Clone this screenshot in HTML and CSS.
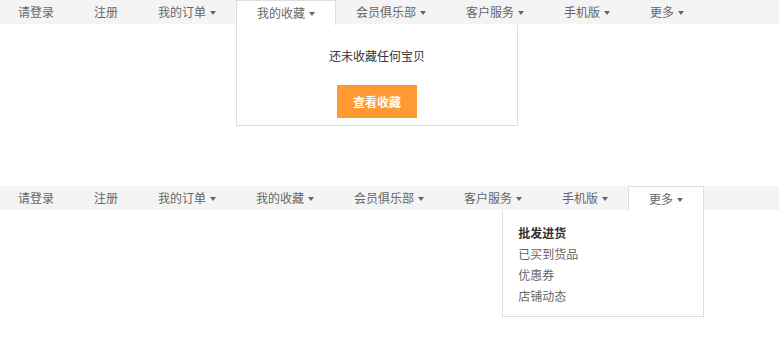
FILE: index.html
```html
<!DOCTYPE html>
<html lang="zh-CN">
<head>
<meta charset="utf-8">
<title>Site nav</title>
<link rel="stylesheet" href="styles.css">
</head>
<body>
<section class="demo">
  <ul class="bar">
    <li class="item first">请登录</li>
    <li class="item">注册</li>
    <li class="item">我的订单<i class="caret"></i></li>
    <li class="item active">我的收藏<i class="caret"></i>
      <div class="drop drop-fav">
        <p class="empty">还未收藏任何宝贝</p>
        <a class="btn">查看收藏</a>
      </div>
    </li>
    <li class="item">会员俱乐部<i class="caret"></i></li>
    <li class="item">客户服务<i class="caret"></i></li>
    <li class="item">手机版<i class="caret"></i></li>
    <li class="item">更多<i class="caret"></i></li>
  </ul>
</section>
<section class="demo">
  <ul class="bar">
    <li class="item first">请登录</li>
    <li class="item">注册</li>
    <li class="item">我的订单<i class="caret"></i></li>
    <li class="item">我的收藏<i class="caret"></i></li>
    <li class="item">会员俱乐部<i class="caret"></i></li>
    <li class="item">客户服务<i class="caret"></i></li>
    <li class="item">手机版<i class="caret"></i></li>
    <li class="item active">更多<i class="caret"></i>
      <ul class="drop drop-more">
        <li class="strong">批发进货</li>
        <li>已买到货品</li>
        <li>优惠券</li>
        <li>店铺动态</li>
      </ul>
    </li>
  </ul>
</section>
</body>
</html>
```
FILE: styles.css
```css
* { box-sizing: border-box; }
html, body { margin: 0; padding: 0; background: #fff; }
body {
  font-family: "Noto Sans CJK SC", "Microsoft YaHei", sans-serif;
  font-size: 12px;
  color: #666;
}
.demo { height: 186px; }
.demo:last-child { height: 162px; }
.bar {
  list-style: none;
  margin: 0;
  padding: 0;
  height: 24px;
  background: #f4f4f4;
  display: flex;
}
.item {
  position: relative;
  height: 24px;
  line-height: 24px;
  padding: 0 20px;
  white-space: nowrap;
  color: #666;
}
.item.first { padding-left: 18px; }
.item.active {
  background: #fff;
  border: 1px solid #ddd;
  border-bottom: 0;
  height: 25px;
  line-height: 23px;
  z-index: 2;
}
.caret {
  display: inline-block;
  width: 0;
  height: 0;
  margin-left: 4px;
  border-top: 4px solid #666;
  border-left: 3.5px solid transparent;
  border-right: 3.5px solid transparent;
  vertical-align: middle;
  position: relative;
  top: -1px;
}
.drop {
  position: absolute;
  top: 24px;
  background: #fff;
  border: 1px solid #ddd;
  border-top: 0;
  z-index: -1;
  margin: 0;
}
.drop-fav {
  left: -1px;
  width: 282px;
  height: 101px;
  display: flex;
  flex-direction: column;
  align-items: center;
  padding-top: 22px;
}
.empty {
  margin: 0;
  line-height: 18px;
  color: #333;
}
.btn {
  margin-top: 20px;
  width: 80px;
  height: 33px;
  line-height: 33px;
  text-align: center;
  background: #ff9933;
  color: #fff;
  font-weight: bold;
}
.drop-more {
  right: -1px;
  width: 202px;
  height: 106px;
  list-style: none;
  padding: 11px 15px 8px;
}
.drop-more li {
  line-height: 21px;
  color: #666;
}
.drop-more li.strong {
  color: #333;
  font-weight: bold;
}
```
